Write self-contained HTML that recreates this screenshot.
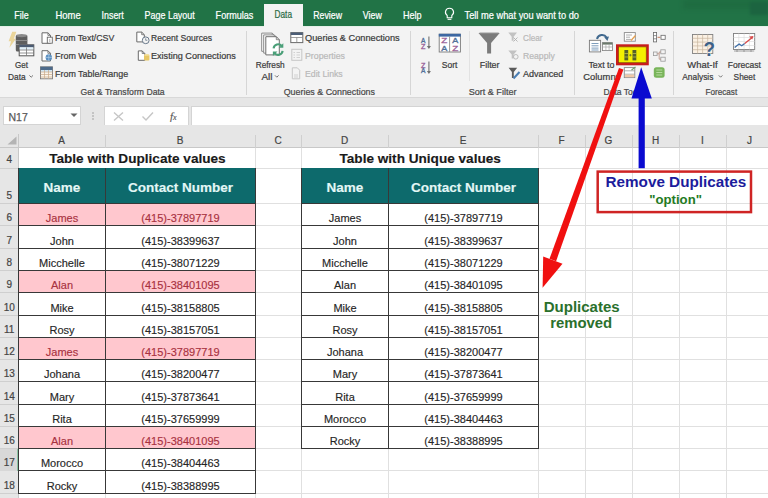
<!DOCTYPE html><html><head><meta charset="utf-8"><style>
*{margin:0;padding:0;box-sizing:border-box}
html,body{width:768px;height:498px;overflow:hidden;background:#fff;font-family:"Liberation Sans", sans-serif;position:relative}
.ab{position:absolute}
.t{position:absolute;white-space:nowrap;line-height:1}
.tab{position:absolute;top:7px;font-size:9px;color:#fff;white-space:nowrap;line-height:12px}
.rb{position:absolute;font-size:8.8px;color:#444;white-space:nowrap;line-height:11px}
.dis{color:#b8b8b8}
.gl{position:absolute;font-size:8.8px;color:#555;white-space:nowrap;line-height:11px}
.sep{position:absolute;width:1px;background:#d6d6d6}
.ch{position:absolute;top:134px;height:14px;font-size:10px;color:#444;-webkit-text-stroke:0.2px #444;text-align:center;line-height:14px}
.rh{position:absolute;left:0;width:18px;font-size:10.5px;color:#4a4a4a;text-align:center}
.c{position:absolute;font-size:11px;color:#222;text-align:center;white-space:nowrap}
.t{-webkit-text-stroke:0.15px currentColor}
</style></head><body>
<div class="ab" style="left:0;top:0;width:768px;height:26px;background:#217346"></div>
<div class="ab" style="left:683px;top:0;width:85px;height:9px;background:#1f6c41;filter:blur(2px)"></div>
<div class="ab" style="left:750px;top:2px;width:18px;height:13px;background:#1c6440;filter:blur(1.5px)"></div>
<div class="ab" style="left:264px;top:3.5px;width:39px;height:23px;background:#f3f3f3"></div>
<svg class="ab" style="left:443px;top:7px" width="13" height="14" viewBox="0 0 13 14"><path d="M6.5 1.2a4 4 0 0 0-2.3 7.3v2.2h4.6V8.5A4 4 0 0 0 6.5 1.2z" fill="none" stroke="#fff" stroke-width="1.1"/><path d="M4.6 12.3h3.8" stroke="#fff" stroke-width="1.1"/></svg>
<div class="ab" style="left:0;top:26px;width:768px;height:71px;background:#f3f3f3"></div>
<div class="ab" style="left:0;top:26px;width:264px;height:1px;background:#e4f0e8"></div>
<div class="ab" style="left:303px;top:26px;width:465px;height:1px;background:#e4f0e8"></div>
<div class="ab" style="left:0;top:97px;width:768px;height:1px;background:#d8d8d8"></div>
<div class="ab" style="left:0;top:98px;width:768px;height:27px;background:#e6e6e6"></div>
<div class="sep" style="left:469px;top:31px;height:50px;background:#e2e2e2"></div>
<div class="sep" style="left:246px;top:31px;height:64px"></div>
<div class="sep" style="left:410px;top:31px;height:64px"></div>
<div class="sep" style="left:574px;top:31px;height:64px"></div>
<div class="sep" style="left:673px;top:31px;height:64px"></div>
<svg class="ab" style="left:0;top:0" width="768" height="498" viewBox="0 0 768 498" font-family="Liberation Sans, sans-serif"><text x="14.3" y="18.6" textLength="14.3" lengthAdjust="spacingAndGlyphs" font-size="10.5" fill="#ffffff" stroke="#ffffff" stroke-width="0.22" font-weight="normal">File</text><text x="55.5" y="18.6" textLength="25.2" lengthAdjust="spacingAndGlyphs" font-size="10.5" fill="#ffffff" stroke="#ffffff" stroke-width="0.22" font-weight="normal">Home</text><text x="101.6" y="18.6" textLength="22.1" lengthAdjust="spacingAndGlyphs" font-size="10.5" fill="#ffffff" stroke="#ffffff" stroke-width="0.22" font-weight="normal">Insert</text><text x="144.5" y="18.6" textLength="50.3" lengthAdjust="spacingAndGlyphs" font-size="10.5" fill="#ffffff" stroke="#ffffff" stroke-width="0.22" font-weight="normal">Page Layout</text><text x="215.6" y="18.6" textLength="37.8" lengthAdjust="spacingAndGlyphs" font-size="10.5" fill="#ffffff" stroke="#ffffff" stroke-width="0.22" font-weight="normal">Formulas</text><text x="313.3" y="18.6" textLength="28.7" lengthAdjust="spacingAndGlyphs" font-size="10.5" fill="#ffffff" stroke="#ffffff" stroke-width="0.22" font-weight="normal">Review</text><text x="362.8" y="18.6" textLength="19" lengthAdjust="spacingAndGlyphs" font-size="10.5" fill="#ffffff" stroke="#ffffff" stroke-width="0.22" font-weight="normal">View</text><text x="402.9" y="18.6" textLength="18.6" lengthAdjust="spacingAndGlyphs" font-size="10.5" fill="#ffffff" stroke="#ffffff" stroke-width="0.22" font-weight="normal">Help</text><text x="464.5" y="18.6" textLength="114.5" lengthAdjust="spacingAndGlyphs" font-size="10.5" fill="#ffffff" stroke="#ffffff" stroke-width="0.22" font-weight="normal">Tell me what you want to do</text><text x="274.5" y="18.4" textLength="17.5" lengthAdjust="spacingAndGlyphs" font-size="10.5" fill="#2a6a44" stroke="#2a6a44" stroke-width="0.22" font-weight="normal">Data</text><text x="15.1" y="67.7" textLength="13" lengthAdjust="spacingAndGlyphs" font-size="9.5" fill="#3b3b3b" stroke="#3b3b3b" stroke-width="0.22" font-weight="normal">Get</text><text x="8.1" y="79.6" textLength="17.6" lengthAdjust="spacingAndGlyphs" font-size="9.5" fill="#3b3b3b" stroke="#3b3b3b" stroke-width="0.22" font-weight="normal">Data</text><text x="55" y="41.3" textLength="59.3" lengthAdjust="spacingAndGlyphs" font-size="9.5" fill="#3b3b3b" stroke="#3b3b3b" stroke-width="0.22" font-weight="normal">From Text/CSV</text><text x="55" y="59.1" textLength="41.5" lengthAdjust="spacingAndGlyphs" font-size="9.5" fill="#3b3b3b" stroke="#3b3b3b" stroke-width="0.22" font-weight="normal">From Web</text><text x="55" y="76.6" textLength="73.2" lengthAdjust="spacingAndGlyphs" font-size="9.5" fill="#3b3b3b" stroke="#3b3b3b" stroke-width="0.22" font-weight="normal">From Table/Range</text><text x="151" y="41.3" textLength="61" lengthAdjust="spacingAndGlyphs" font-size="9.5" fill="#3b3b3b" stroke="#3b3b3b" stroke-width="0.22" font-weight="normal">Recent Sources</text><text x="151" y="59.1" textLength="84.8" lengthAdjust="spacingAndGlyphs" font-size="9.5" fill="#3b3b3b" stroke="#3b3b3b" stroke-width="0.22" font-weight="normal">Existing Connections</text><text x="80.5" y="94.6" textLength="84.2" lengthAdjust="spacingAndGlyphs" font-size="9.5" fill="#484848" stroke="#484848" stroke-width="0.22" font-weight="normal">Get &amp; Transform Data</text><text x="255.7" y="67.7" textLength="29" lengthAdjust="spacingAndGlyphs" font-size="9.5" fill="#3b3b3b" stroke="#3b3b3b" stroke-width="0.22" font-weight="normal">Refresh</text><text x="261.5" y="79.6" textLength="11" lengthAdjust="spacingAndGlyphs" font-size="9.5" fill="#3b3b3b" stroke="#3b3b3b" stroke-width="0.22" font-weight="normal">All</text><text x="305" y="41.3" textLength="94.7" lengthAdjust="spacingAndGlyphs" font-size="9.5" fill="#3b3b3b" stroke="#3b3b3b" stroke-width="0.22" font-weight="normal">Queries &amp; Connections</text><text x="305" y="59.1" textLength="40" lengthAdjust="spacingAndGlyphs" font-size="9.5" fill="#b9b9b9" stroke="#b9b9b9" stroke-width="0.22" font-weight="normal">Properties</text><text x="305" y="76.6" textLength="37.7" lengthAdjust="spacingAndGlyphs" font-size="9.5" fill="#b9b9b9" stroke="#b9b9b9" stroke-width="0.22" font-weight="normal">Edit Links</text><text x="283.7" y="94.6" textLength="91.3" lengthAdjust="spacingAndGlyphs" font-size="9.5" fill="#484848" stroke="#484848" stroke-width="0.22" font-weight="normal">Queries &amp; Connections</text><text x="441.7" y="67.7" textLength="15.7" lengthAdjust="spacingAndGlyphs" font-size="9.5" fill="#3b3b3b" stroke="#3b3b3b" stroke-width="0.22" font-weight="normal">Sort</text><text x="479.7" y="67.7" textLength="19.9" lengthAdjust="spacingAndGlyphs" font-size="9.5" fill="#3b3b3b" stroke="#3b3b3b" stroke-width="0.22" font-weight="normal">Filter</text><text x="523" y="41.3" textLength="19.5" lengthAdjust="spacingAndGlyphs" font-size="9.5" fill="#b9b9b9" stroke="#b9b9b9" stroke-width="0.22" font-weight="normal">Clear</text><text x="523" y="59.1" textLength="31.7" lengthAdjust="spacingAndGlyphs" font-size="9.5" fill="#b9b9b9" stroke="#b9b9b9" stroke-width="0.22" font-weight="normal">Reapply</text><text x="523" y="76.6" textLength="40.3" lengthAdjust="spacingAndGlyphs" font-size="9.5" fill="#3b3b3b" stroke="#3b3b3b" stroke-width="0.22" font-weight="normal">Advanced</text><text x="468.7" y="94.6" textLength="47.8" lengthAdjust="spacingAndGlyphs" font-size="9.5" fill="#484848" stroke="#484848" stroke-width="0.22" font-weight="normal">Sort &amp; Filter</text><text x="588.4" y="67.7" textLength="26.1" lengthAdjust="spacingAndGlyphs" font-size="9.5" fill="#3b3b3b" stroke="#3b3b3b" stroke-width="0.22" font-weight="normal">Text to</text><text x="583.3" y="79.6" textLength="37" lengthAdjust="spacingAndGlyphs" font-size="9.5" fill="#3b3b3b" stroke="#3b3b3b" stroke-width="0.22" font-weight="normal">Columns</text><text x="603.6" y="94.6" textLength="40" lengthAdjust="spacingAndGlyphs" font-size="9.5" fill="#484848" stroke="#484848" stroke-width="0.22" font-weight="normal">Data Tools</text><text x="687.3" y="67.7" textLength="30.4" lengthAdjust="spacingAndGlyphs" font-size="9.5" fill="#3b3b3b" stroke="#3b3b3b" stroke-width="0.22" font-weight="normal">What-If</text><text x="682.3" y="79.6" textLength="31.1" lengthAdjust="spacingAndGlyphs" font-size="9.5" fill="#3b3b3b" stroke="#3b3b3b" stroke-width="0.22" font-weight="normal">Analysis</text><text x="727.8" y="67.7" textLength="33.2" lengthAdjust="spacingAndGlyphs" font-size="9.5" fill="#3b3b3b" stroke="#3b3b3b" stroke-width="0.22" font-weight="normal">Forecast</text><text x="733.6" y="79.6" textLength="21.7" lengthAdjust="spacingAndGlyphs" font-size="9.5" fill="#3b3b3b" stroke="#3b3b3b" stroke-width="0.22" font-weight="normal">Sheet</text><text x="705.4" y="94.6" textLength="31.8" lengthAdjust="spacingAndGlyphs" font-size="9.5" fill="#484848" stroke="#484848" stroke-width="0.22" font-weight="normal">Forecast</text><path d="M29.4 75.39999999999999l1.8 1.8l1.8-1.8" fill="none" stroke="#666" stroke-width="0.9"/><path d="M275.0 75.39999999999999l1.8 1.8l1.8-1.8" fill="none" stroke="#666" stroke-width="0.9"/><path d="M718.8000000000001 75.39999999999999l1.8 1.8l1.8-1.8" fill="none" stroke="#666" stroke-width="0.9"/></svg>
<svg class="ab" style="left:0;top:0" width="768" height="498" viewBox="0 0 768 498" font-family="Liberation Sans, sans-serif"><path d="M12.2 31.8h4.2l-2.6 7h2.2l-6.6 9l1.6-6.6h-2.4z" fill="#ead59a"/><rect x="15.8" y="35" width="11.6" height="16.5" rx="1.5" fill="#5e5e5e"/><ellipse cx="21.6" cy="35.6" rx="5.8" ry="1.6" fill="#8a8a8a"/><path d="M15.8 40.5h11.6M15.8 44.5h11.6" stroke="#9a9a9a" stroke-width="0.8"/><rect x="19.2" y="44.8" width="14.6" height="11" fill="#fff" stroke="#555" stroke-width="1"/><rect x="19.2" y="44.8" width="14.6" height="2.6" fill="#4b5b72"/><rect x="19.7" y="47.4" width="13.6" height="2.2" fill="#dff0fa"/><path d="M19.2 50h14.6M19.2 53h14.6M26.5 47.4v8.4" stroke="#777" stroke-width="0.8"/><path d="M42.0 32.8h5.9l2.6 2.6v7.9h-8.5z" fill="#fff" stroke="#6a6a6a" stroke-width="1"/><path d="M47.9 32.8v2.6h2.6" fill="none" stroke="#6a6a6a" stroke-width="0.8"/><rect x="47.3" y="37.2" width="5" height="6" fill="#fff" stroke="#6a6a6a" stroke-width="0.9"/><path d="M49.8 39v3" stroke="#888" stroke-width="0.7"/><path d="M42.0 50.7h5.9l2.6 2.6v7.700000000000001h-8.5z" fill="#fff" stroke="#6a6a6a" stroke-width="1"/><path d="M47.9 50.7v2.6h2.6" fill="none" stroke="#6a6a6a" stroke-width="0.8"/><circle cx="48.8" cy="57.4" r="3.2" fill="#5b8fc0"/><path d="M45.6 57.4h6.4M48.8 54.2v6.4" stroke="#bcd6ee" stroke-width="0.6"/><rect x="40.5" y="66.8" width="12" height="12" fill="#fbf4ea" stroke="#7a7a7a" stroke-width="0.9"/><rect x="40.5" y="66.8" width="12" height="3.2" fill="#4d6a8a"/><rect x="41" y="70" width="11" height="1.8" fill="#cfe6f5"/><path d="M40.5 72h12M40.5 74.5h12M40.5 77h12M44.5 70v9M48.5 70v9" stroke="#c9a98a" stroke-width="0.7"/><path d="M136.8 32.1h4.9l2.6 2.6v7.200000000000001h-7.5z" fill="#fff" stroke="#6a6a6a" stroke-width="1"/><path d="M141.70000000000002 32.1v2.6h2.6" fill="none" stroke="#6a6a6a" stroke-width="0.8"/><circle cx="145.7" cy="40.3" r="3.4" fill="#f3f3f3" stroke="#6a7a8c" stroke-width="1"/><path d="M145.7 38.3v2h1.6" fill="none" stroke="#6a7a8c" stroke-width="0.8"/><path d="M138.3 50.9h3.9l2.6 2.6v6.800000000000001h-6.5z" fill="#fff" stroke="#6a6a6a" stroke-width="1"/><path d="M142.20000000000002 50.9v2.6h2.6" fill="none" stroke="#6a6a6a" stroke-width="0.8"/><rect x="144" y="54.7" width="5.4" height="5.8" rx="1" fill="#e7c765"/><ellipse cx="146.7" cy="54.9" rx="2.7" ry="0.9" fill="#f4df9a"/><path d="M261.7 33.1h10.5l3 3v15.2h-13.5z" fill="#fff" stroke="#8a8a8a" stroke-width="1"/><path d="M272.2 33.1v3h3" fill="none" stroke="#8a8a8a" stroke-width="0.8"/><path d="M263.7 34.9h10.5l3 3v15.2h-13.5z" fill="#fff" stroke="#8a8a8a" stroke-width="1"/><path d="M274.2 34.9v3h3" fill="none" stroke="#8a8a8a" stroke-width="0.8"/><path d="M265.8 36.7h10.5l3 3v15.2h-13.5z" fill="#fff" stroke="#6e6e6e" stroke-width="1"/><path d="M276.3 36.7v3h3" fill="none" stroke="#6e6e6e" stroke-width="0.8"/><path d="M273.6 48.3a4.6 4.6 0 0 1 8.1-2.4" fill="none" stroke="#4a9f78" stroke-width="2.1"/><path d="M283.3 43.2v4.6h-4.6z" fill="#4a9f78"/><path d="M282.6 50.8a4.6 4.6 0 0 1-8.1 2.4" fill="none" stroke="#4a9f78" stroke-width="2.1"/><path d="M272.9 56v-4.6h4.6z" fill="#4a9f78"/><rect x="290.8" y="32.6" width="12" height="10" fill="#fff" stroke="#6a6a6a" stroke-width="1"/><rect x="290.8" y="32.6" width="12" height="2.4" fill="#4d5f78"/><path d="M290.8 37.5h12M296.8 37.5v5" stroke="#888" stroke-width="0.8"/><rect x="291.8" y="49.3" width="10" height="11" fill="none" stroke="#c6c6c6" stroke-width="1"/><path d="M293.5 52.5h1.5M296.5 52.5h3.5M293.5 55h1.5M296.5 55h3.5M293.5 57.5h1.5M296.5 57.5h3.5" stroke="#c8c8c8" stroke-width="0.8"/><path d="M292.3 67.8h5l2.4 2.4v8.6h-7.4z" fill="none" stroke="#c6c6c6" stroke-width="1"/><path d="M294 75h4M294 77h4" stroke="#c8c8c8" stroke-width="0.8"/><text x="421" y="42.8" font-size="7.4" fill="#4f6f98" textLength="4.4" lengthAdjust="spacingAndGlyphs" stroke="#4f6f98" stroke-width="0.35">A</text><text x="421" y="48.7" font-size="7.4" fill="#9a5f98" textLength="4.4" lengthAdjust="spacingAndGlyphs" stroke="#9a5f98" stroke-width="0.35">Z</text><path d="M428.9 36.5v11" stroke="#707070" stroke-width="1.1"/><path d="M426.9 46l2 3l2-3z" fill="#707070"/><text x="421" y="67.8" font-size="7.4" fill="#9a5f98" textLength="4.4" lengthAdjust="spacingAndGlyphs" stroke="#9a5f98" stroke-width="0.35">Z</text><text x="421" y="73.4" font-size="7.4" fill="#4f6f98" textLength="4.4" lengthAdjust="spacingAndGlyphs" stroke="#4f6f98" stroke-width="0.35">A</text><path d="M428.9 61.5v11" stroke="#707070" stroke-width="1.1"/><path d="M426.9 71l2 3l2-3z" fill="#707070"/><rect x="439.2" y="34.2" width="21.2" height="17.8" fill="#fff" stroke="#7a7a7a" stroke-width="0.9"/><rect x="438.8" y="33.8" width="22" height="2.8" fill="#3d68a2"/><path d="M449.6 36.5v15.5" stroke="#8a8a8a" stroke-width="0.9"/><text x="441.2" y="43.4" font-size="7.8" fill="#9a5f98" textLength="6" lengthAdjust="spacingAndGlyphs" stroke="#9a5f98" stroke-width="0.35">Z</text><text x="441.2" y="51" font-size="7.8" fill="#4f6f98" textLength="6" lengthAdjust="spacingAndGlyphs" stroke="#4f6f98" stroke-width="0.35">A</text><text x="452.3" y="43.4" font-size="7.8" fill="#4f6f98" textLength="6" lengthAdjust="spacingAndGlyphs" stroke="#4f6f98" stroke-width="0.35">A</text><text x="452.3" y="51" font-size="7.8" fill="#9a5f98" textLength="6" lengthAdjust="spacingAndGlyphs" stroke="#9a5f98" stroke-width="0.35">Z</text><path d="M478.5 33h21.2l-8.6 10v10.5h-4v-10.5z" fill="#7b7b7b"/><path d="M479.5 33h19.2" stroke="#9a9a9a" stroke-width="1"/><path d="M508.3 32.6h8.7l-3.4 4.2v4h-1.9v-4z" fill="#c2c2c2"/><path d="M513.5 37.5l4 4M517.5 37.5l-4 4" stroke="#b0b0b0" stroke-width="0.9"/><path d="M508.3 50.4h8.7l-3.4 4.2v4h-1.9v-4z" fill="#c2c2c2"/><circle cx="515.8" cy="56.8" r="2.3" fill="none" stroke="#b5b5b5" stroke-width="0.9"/><path d="M508.6 67.8h8.6l-3.4 4.2v6h-1.9v-6z" fill="#5a5a5a"/><path d="M513.5 78.5l6-6.5" stroke="#4a7fb5" stroke-width="2"/><path d="M597 39a5.3 5.3 0 0 1 9.6-1.5" fill="none" stroke="#41698e" stroke-width="2"/><path d="M604.2 37.2l4.8 -0.8l-1.6 4.6z" fill="#41698e"/><rect x="589.4" y="40.3" width="11.2" height="11.6" fill="#fff" stroke="#7a7a7a" stroke-width="0.9"/><path d="M591.5 43.5h7M591.5 45.8h7M591.5 48.1h7M591.5 50h7" stroke="#6f93b5" stroke-width="0.9"/><rect x="602.6" y="42.6" width="9.8" height="8" fill="#fff" stroke="#808080" stroke-width="0.8"/><rect x="602.6" y="42.6" width="9.8" height="2" fill="#6b7a6b"/><path d="M602.6 47h9.8M605.9 44.6v6M609.1 44.6v6" stroke="#999" stroke-width="0.6"/><rect x="624.3" y="32.6" width="11" height="8.6" fill="#fff" stroke="#8a8a8a" stroke-width="0.9"/><path d="M626 35h6M626 37.2h4M626 39.4h5" stroke="#9a9a9a" stroke-width="0.8"/><path d="M631 40.5l4.5-5" stroke="#e5a050" stroke-width="1.3"/><rect x="624.3" y="67.6" width="10.5" height="10" fill="#fff" stroke="#8a8a8a" stroke-width="0.9"/><path d="M624.3 70.8h10.5M624.3 74.2h10.5" stroke="#999" stroke-width="0.8"/><rect x="625" y="74.6" width="9" height="2.6" fill="#f0c8a8"/><path d="M631.5 70l4-3" stroke="#6aa36a" stroke-width="1.1"/><rect x="653.4" y="32.5" width="3.2" height="9.4" fill="#fff" stroke="#6a6a6a" stroke-width="0.8"/><path d="M653.4 35.6h3.2M653.4 38.8h3.2" stroke="#6a6a6a" stroke-width="0.7"/><path d="M657.5 37.3h2.8" stroke="#c07050" stroke-width="0.9"/><rect x="661" y="35.3" width="4.2" height="4" fill="#fff" stroke="#6a6a6a" stroke-width="0.8"/><rect x="653.5" y="52" width="3.6" height="3.6" fill="none" stroke="#9a9a9a" stroke-width="0.8"/><rect x="660.8" y="49.8" width="4.4" height="4" fill="none" stroke="#9a9a9a" stroke-width="0.8"/><rect x="660.8" y="57.2" width="4.4" height="4" fill="none" stroke="#9a9a9a" stroke-width="0.8"/><path d="M657.1 53.8h2M659.2 52v7.2h1.6M659.2 52h1.6" fill="none" stroke="#b08070" stroke-width="0.7"/><rect x="653.8" y="67.2" width="10.8" height="10.6" rx="2.5" fill="#79b55a"/><path d="M656.3 70h6M656.3 72.5h6M656.3 75h6" stroke="#c5e3b0" stroke-width="0.8"/><rect x="692.5" y="34.5" width="20.3" height="19" fill="#fbf1e4" stroke="#808080" stroke-width="0.9"/><path d="M692.5 38.3h20.3M692.5 42.1h20.3M692.5 45.9h20.3M692.5 49.7h20.3M697.6 34.5v19M702.6 34.5v19M707.7 34.5v19" stroke="#c8b49e" stroke-width="0.7"/><text x="703.6" y="55.8" font-size="19.5" font-weight="bold" fill="#3e6187" stroke="#f3f3f3" stroke-width="0.8" paint-order="stroke" textLength="11.5" lengthAdjust="spacingAndGlyphs">?</text><rect x="733.5" y="33.5" width="21.2" height="16" fill="#fff" stroke="#7d7d7d" stroke-width="0.9"/><path d="M733.5 37.5h21.2M733.5 41.5h21.2M733.5 45.5h21.2M738.8 33.5v16M744.1 33.5v16M749.4 33.5v16" stroke="#d8d8d8" stroke-width="0.6"/><path d="M734 51h20.2M737 49.7v2.3M744 49.7v2.3M751 49.7v2.3" stroke="#8a8a8a" stroke-width="0.8"/><path d="M734.6 47.6l4.5-3.6l2.6 1.8l3-2.4" fill="none" stroke="#3e6ea8" stroke-width="1.3"/><path d="M744.7 43.4l7.5-6" fill="none" stroke="#d84a4a" stroke-width="1.3"/><path d="M753.5 36l-4.3 0.6l3 3z" fill="#d84a4a"/><rect x="617.2" y="45.5" width="30.4" height="18.6" fill="#f4f000" stroke="#c81c1c" stroke-width="2.4"/><rect x="618.6" y="46.9" width="27.6" height="15.8" fill="none" stroke="#7a2a10" stroke-width="0.6"/><rect x="624.4" y="50" width="3.8" height="10.4" fill="#56602a"/><rect x="632.5" y="50" width="3.8" height="10.4" fill="#56602a"/><path d="M624.4 53.5h3.8M624.4 57h3.8M632.5 53.5h3.8M632.5 57h3.8" stroke="#c8cc50" stroke-width="0.7"/><path d="M629.2 55.2h2.4M630.4 54v2.4" stroke="#6a7030" stroke-width="0.8"/></svg>
<div class="ab" style="left:3px;top:106px;width:78px;height:19px;background:#fff;border:1px solid #d4d4d4"></div>
<div class="t" style="left:8.5px;top:111.5px;font-size:10.5px;color:#5a5a5a;-webkit-text-stroke:0.25px #5a5a5a">N17</div>
<svg class="ab" style="left:70px;top:113px" width="8" height="5"><path d="M0.5 0.5h7l-3.5 3.5z" fill="#666"/></svg>
<svg class="ab" style="left:91px;top:111px" width="4" height="10"><circle cx="2" cy="2" r="0.8" fill="#999"/><circle cx="2" cy="5" r="0.8" fill="#999"/><circle cx="2" cy="8" r="0.8" fill="#999"/></svg>
<div class="ab" style="left:104px;top:106px;width:85px;height:20px;background:#fff;border:1px solid #d4d4d4"></div>
<svg class="ab" style="left:112px;top:111px" width="13" height="11"><path d="M2 1.5l9 8M11 1.5l-9 8" stroke="#c6c6c6" stroke-width="1.4"/></svg>
<svg class="ab" style="left:141px;top:111px" width="13" height="11"><path d="M1.5 5.5l3.5 3.5 7-7.5" fill="none" stroke="#c6c6c6" stroke-width="1.4"/></svg>
<div class="t" style="left:170px;top:111px;font-size:11px;color:#555;font-family:'Liberation Serif',serif;font-style:italic">f<span style="font-size:8px">x</span></div>
<div class="ab" style="left:191px;top:106px;width:580px;height:20px;background:#fff;border:1px solid #d4d4d4"></div>
<div class="ab" style="left:0;top:125px;width:768px;height:23px;background:#e6e6e6"></div>
<div class="ab" style="left:0;top:147px;width:768px;height:1px;background:#c8c8c8"></div>
<svg class="ab" style="left:7px;top:136px" width="10" height="9"><path d="M9.5 0.5v8h-9z" fill="#b4b4b4"/></svg>
<div class="ab" style="left:0;top:148px;width:18px;height:350px;background:#e6e6e6"></div>
<div class="ab" style="left:18px;top:134px;width:1px;height:364px;background:#c8c8c8"></div>
<div class="ch" style="left:18px;width:87px">A</div>
<div class="ab" style="left:105px;top:135px;width:1px;height:13px;background:#cfcfcf"></div>
<div class="ch" style="left:105px;width:150px">B</div>
<div class="ab" style="left:255px;top:135px;width:1px;height:13px;background:#cfcfcf"></div>
<div class="ch" style="left:255px;width:46px">C</div>
<div class="ab" style="left:301px;top:135px;width:1px;height:13px;background:#cfcfcf"></div>
<div class="ch" style="left:301px;width:87px">D</div>
<div class="ab" style="left:388px;top:135px;width:1px;height:13px;background:#cfcfcf"></div>
<div class="ch" style="left:388px;width:150px">E</div>
<div class="ab" style="left:538px;top:135px;width:1px;height:13px;background:#cfcfcf"></div>
<div class="ch" style="left:538px;width:47px">F</div>
<div class="ab" style="left:585px;top:135px;width:1px;height:13px;background:#cfcfcf"></div>
<div class="ch" style="left:585px;width:47px">G</div>
<div class="ab" style="left:632px;top:135px;width:1px;height:13px;background:#cfcfcf"></div>
<div class="ch" style="left:632px;width:47px">H</div>
<div class="ab" style="left:679px;top:135px;width:1px;height:13px;background:#cfcfcf"></div>
<div class="ch" style="left:679px;width:47px">I</div>
<div class="ab" style="left:726px;top:135px;width:1px;height:13px;background:#cfcfcf"></div>
<div class="ch" style="left:726px;width:47px">J</div>
<div class="ab" style="left:773px;top:135px;width:1px;height:13px;background:#cfcfcf"></div>
<div class="ab" style="left:105px;top:148px;width:1px;height:350px;background:#e0e0e0"></div>
<div class="ab" style="left:255px;top:148px;width:1px;height:350px;background:#e0e0e0"></div>
<div class="ab" style="left:301px;top:148px;width:1px;height:350px;background:#e0e0e0"></div>
<div class="ab" style="left:388px;top:148px;width:1px;height:350px;background:#e0e0e0"></div>
<div class="ab" style="left:538px;top:148px;width:1px;height:350px;background:#e0e0e0"></div>
<div class="ab" style="left:585px;top:148px;width:1px;height:350px;background:#e0e0e0"></div>
<div class="ab" style="left:632px;top:148px;width:1px;height:350px;background:#e0e0e0"></div>
<div class="ab" style="left:679px;top:148px;width:1px;height:350px;background:#e0e0e0"></div>
<div class="ab" style="left:726px;top:148px;width:1px;height:350px;background:#e0e0e0"></div>
<div class="ab" style="left:19px;top:168px;width:750px;height:1px;background:#e0e0e0"></div>
<div class="ab" style="left:0;top:168px;width:18px;height:1px;background:#cfcfcf"></div>
<div class="ab" style="left:19px;top:203px;width:750px;height:1px;background:#e0e0e0"></div>
<div class="ab" style="left:0;top:203px;width:18px;height:1px;background:#cfcfcf"></div>
<div class="ab" style="left:19px;top:225px;width:750px;height:1px;background:#e0e0e0"></div>
<div class="ab" style="left:0;top:225px;width:18px;height:1px;background:#cfcfcf"></div>
<div class="ab" style="left:19px;top:248px;width:750px;height:1px;background:#e0e0e0"></div>
<div class="ab" style="left:0;top:248px;width:18px;height:1px;background:#cfcfcf"></div>
<div class="ab" style="left:19px;top:270px;width:750px;height:1px;background:#e0e0e0"></div>
<div class="ab" style="left:0;top:270px;width:18px;height:1px;background:#cfcfcf"></div>
<div class="ab" style="left:19px;top:292px;width:750px;height:1px;background:#e0e0e0"></div>
<div class="ab" style="left:0;top:292px;width:18px;height:1px;background:#cfcfcf"></div>
<div class="ab" style="left:19px;top:315px;width:750px;height:1px;background:#e0e0e0"></div>
<div class="ab" style="left:0;top:315px;width:18px;height:1px;background:#cfcfcf"></div>
<div class="ab" style="left:19px;top:337px;width:750px;height:1px;background:#e0e0e0"></div>
<div class="ab" style="left:0;top:337px;width:18px;height:1px;background:#cfcfcf"></div>
<div class="ab" style="left:19px;top:359px;width:750px;height:1px;background:#e0e0e0"></div>
<div class="ab" style="left:0;top:359px;width:18px;height:1px;background:#cfcfcf"></div>
<div class="ab" style="left:19px;top:381px;width:750px;height:1px;background:#e0e0e0"></div>
<div class="ab" style="left:0;top:381px;width:18px;height:1px;background:#cfcfcf"></div>
<div class="ab" style="left:19px;top:404px;width:750px;height:1px;background:#e0e0e0"></div>
<div class="ab" style="left:0;top:404px;width:18px;height:1px;background:#cfcfcf"></div>
<div class="ab" style="left:19px;top:426px;width:750px;height:1px;background:#e0e0e0"></div>
<div class="ab" style="left:0;top:426px;width:18px;height:1px;background:#cfcfcf"></div>
<div class="ab" style="left:19px;top:448px;width:750px;height:1px;background:#e0e0e0"></div>
<div class="ab" style="left:0;top:448px;width:18px;height:1px;background:#cfcfcf"></div>
<div class="ab" style="left:19px;top:470px;width:750px;height:1px;background:#e0e0e0"></div>
<div class="ab" style="left:0;top:470px;width:18px;height:1px;background:#cfcfcf"></div>
<div class="ab" style="left:19px;top:493px;width:750px;height:1px;background:#e0e0e0"></div>
<div class="ab" style="left:0;top:493px;width:18px;height:1px;background:#cfcfcf"></div>
<div class="ab" style="left:19px;top:515px;width:750px;height:1px;background:#e0e0e0"></div>
<div class="ab" style="left:0;top:515px;width:18px;height:1px;background:#cfcfcf"></div>
<div class="ab" style="left:0;top:449px;width:18px;height:22px;background:#d8d8d8"></div>
<div class="ab" style="left:17px;top:449px;width:1px;height:22px;background:#8cc4a4"></div>
<div class="ab" style="left:105px;top:148px;width:1px;height:20px;background:#fff"></div>
<div class="ab" style="left:388px;top:148px;width:1px;height:20px;background:#fff"></div>
<div class="t" style="left:-290.8px;width:600px;text-align:center;top:155.23px;font-size:10px;color:#444;-webkit-text-stroke:0.2px #444">4</div>
<div class="t" style="left:-290.8px;width:600px;text-align:center;top:191.44px;font-size:10px;color:#444;-webkit-text-stroke:0.2px #444">5</div>
<div class="t" style="left:-290.8px;width:600px;text-align:center;top:213.44px;font-size:10px;color:#444;-webkit-text-stroke:0.2px #444">6</div>
<div class="t" style="left:-290.8px;width:600px;text-align:center;top:236.44px;font-size:10px;color:#444;-webkit-text-stroke:0.2px #444">7</div>
<div class="t" style="left:-290.8px;width:600px;text-align:center;top:258.44px;font-size:10px;color:#444;-webkit-text-stroke:0.2px #444">8</div>
<div class="t" style="left:-290.8px;width:600px;text-align:center;top:280.44px;font-size:10px;color:#444;-webkit-text-stroke:0.2px #444">9</div>
<div class="t" style="left:-290.8px;width:600px;text-align:center;top:303.44px;font-size:10px;color:#444;-webkit-text-stroke:0.2px #444">10</div>
<div class="t" style="left:-290.8px;width:600px;text-align:center;top:325.44px;font-size:10px;color:#444;-webkit-text-stroke:0.2px #444">11</div>
<div class="t" style="left:-290.8px;width:600px;text-align:center;top:347.44px;font-size:10px;color:#444;-webkit-text-stroke:0.2px #444">12</div>
<div class="t" style="left:-290.8px;width:600px;text-align:center;top:369.44px;font-size:10px;color:#444;-webkit-text-stroke:0.2px #444">13</div>
<div class="t" style="left:-290.8px;width:600px;text-align:center;top:392.44px;font-size:10px;color:#444;-webkit-text-stroke:0.2px #444">14</div>
<div class="t" style="left:-290.8px;width:600px;text-align:center;top:414.44px;font-size:10px;color:#444;-webkit-text-stroke:0.2px #444">15</div>
<div class="t" style="left:-290.8px;width:600px;text-align:center;top:436.44px;font-size:10px;color:#444;-webkit-text-stroke:0.2px #444">16</div>
<div class="t" style="left:-290.8px;width:600px;text-align:center;top:458.44px;font-size:10px;color:#444;-webkit-text-stroke:0.2px #444">17</div>
<div class="t" style="left:-290.8px;width:600px;text-align:center;top:481.44px;font-size:10px;color:#444;-webkit-text-stroke:0.2px #444">18</div>
<div class="ab" style="left:18px;top:168px;width:238px;height:35px;background:#0d6a6c"></div>
<div class="ab" style="left:18px;top:203px;width:237px;height:22px;background:#ffc7ce"></div>
<div class="ab" style="left:18px;top:270px;width:237px;height:22px;background:#ffc7ce"></div>
<div class="ab" style="left:18px;top:337px;width:237px;height:22px;background:#ffc7ce"></div>
<div class="ab" style="left:18px;top:426px;width:237px;height:22px;background:#ffc7ce"></div>
<div class="ab" style="left:18px;top:203px;width:238px;height:1px;background:#383838"></div>
<div class="ab" style="left:18px;top:225px;width:238px;height:1px;background:#383838"></div>
<div class="ab" style="left:18px;top:248px;width:238px;height:1px;background:#383838"></div>
<div class="ab" style="left:18px;top:270px;width:238px;height:1px;background:#383838"></div>
<div class="ab" style="left:18px;top:292px;width:238px;height:1px;background:#383838"></div>
<div class="ab" style="left:18px;top:315px;width:238px;height:1px;background:#383838"></div>
<div class="ab" style="left:18px;top:337px;width:238px;height:1px;background:#383838"></div>
<div class="ab" style="left:18px;top:359px;width:238px;height:1px;background:#383838"></div>
<div class="ab" style="left:18px;top:381px;width:238px;height:1px;background:#383838"></div>
<div class="ab" style="left:18px;top:404px;width:238px;height:1px;background:#383838"></div>
<div class="ab" style="left:18px;top:426px;width:238px;height:1px;background:#383838"></div>
<div class="ab" style="left:18px;top:448px;width:238px;height:1px;background:#383838"></div>
<div class="ab" style="left:18px;top:470px;width:238px;height:1px;background:#383838"></div>
<div class="ab" style="left:18px;top:493px;width:238px;height:1px;background:#383838"></div>
<div class="ab" style="left:18px;top:168px;width:1px;height:326px;background:#383838"></div>
<div class="ab" style="left:105px;top:168px;width:1px;height:326px;background:#383838"></div>
<div class="ab" style="left:255px;top:168px;width:1px;height:326px;background:#383838"></div>
<div class="t" style="left:-238.0px;width:600px;text-align:center;top:180.57px;font-size:13.5px;font-weight:bold;color:#e3f7f6">Name</div>
<div class="t" style="left:-119.5px;width:600px;text-align:center;top:180.57px;font-size:13.5px;font-weight:bold;color:#e3f7f6">Contact Number</div>
<div class="t" style="left:-238.0px;width:600px;text-align:center;top:212.79px;font-size:11px;color:#a8323f">James</div>
<div class="t" style="left:-119.5px;width:600px;text-align:center;top:212.79px;font-size:11px;color:#a8323f">(415)-37897719</div>
<div class="t" style="left:-238.0px;width:600px;text-align:center;top:235.79px;font-size:11px;color:#262626">John</div>
<div class="t" style="left:-119.5px;width:600px;text-align:center;top:235.79px;font-size:11px;color:#262626">(415)-38399637</div>
<div class="t" style="left:-238.0px;width:600px;text-align:center;top:257.79px;font-size:11px;color:#262626">Micchelle</div>
<div class="t" style="left:-119.5px;width:600px;text-align:center;top:257.79px;font-size:11px;color:#262626">(415)-38071229</div>
<div class="t" style="left:-238.0px;width:600px;text-align:center;top:279.79px;font-size:11px;color:#a8323f">Alan</div>
<div class="t" style="left:-119.5px;width:600px;text-align:center;top:279.79px;font-size:11px;color:#a8323f">(415)-38401095</div>
<div class="t" style="left:-238.0px;width:600px;text-align:center;top:302.79px;font-size:11px;color:#262626">Mike</div>
<div class="t" style="left:-119.5px;width:600px;text-align:center;top:302.79px;font-size:11px;color:#262626">(415)-38158805</div>
<div class="t" style="left:-238.0px;width:600px;text-align:center;top:324.79px;font-size:11px;color:#262626">Rosy</div>
<div class="t" style="left:-119.5px;width:600px;text-align:center;top:324.79px;font-size:11px;color:#262626">(415)-38157051</div>
<div class="t" style="left:-238.0px;width:600px;text-align:center;top:346.79px;font-size:11px;color:#a8323f">James</div>
<div class="t" style="left:-119.5px;width:600px;text-align:center;top:346.79px;font-size:11px;color:#a8323f">(415)-37897719</div>
<div class="t" style="left:-238.0px;width:600px;text-align:center;top:368.79px;font-size:11px;color:#262626">Johana</div>
<div class="t" style="left:-119.5px;width:600px;text-align:center;top:368.79px;font-size:11px;color:#262626">(415)-38200477</div>
<div class="t" style="left:-238.0px;width:600px;text-align:center;top:391.79px;font-size:11px;color:#262626">Mary</div>
<div class="t" style="left:-119.5px;width:600px;text-align:center;top:391.79px;font-size:11px;color:#262626">(415)-37873641</div>
<div class="t" style="left:-238.0px;width:600px;text-align:center;top:413.79px;font-size:11px;color:#262626">Rita</div>
<div class="t" style="left:-119.5px;width:600px;text-align:center;top:413.79px;font-size:11px;color:#262626">(415)-37659999</div>
<div class="t" style="left:-238.0px;width:600px;text-align:center;top:435.79px;font-size:11px;color:#a8323f">Alan</div>
<div class="t" style="left:-119.5px;width:600px;text-align:center;top:435.79px;font-size:11px;color:#a8323f">(415)-38401095</div>
<div class="t" style="left:-238.0px;width:600px;text-align:center;top:457.79px;font-size:11px;color:#262626">Morocco</div>
<div class="t" style="left:-119.5px;width:600px;text-align:center;top:457.79px;font-size:11px;color:#262626">(415)-38404463</div>
<div class="t" style="left:-238.0px;width:600px;text-align:center;top:480.79px;font-size:11px;color:#262626">Rocky</div>
<div class="t" style="left:-119.5px;width:600px;text-align:center;top:480.79px;font-size:11px;color:#262626">(415)-38388995</div>
<div class="ab" style="left:301px;top:168px;width:238px;height:35px;background:#0d6a6c"></div>
<div class="ab" style="left:301px;top:203px;width:238px;height:1px;background:#383838"></div>
<div class="ab" style="left:301px;top:225px;width:238px;height:1px;background:#383838"></div>
<div class="ab" style="left:301px;top:248px;width:238px;height:1px;background:#383838"></div>
<div class="ab" style="left:301px;top:270px;width:238px;height:1px;background:#383838"></div>
<div class="ab" style="left:301px;top:292px;width:238px;height:1px;background:#383838"></div>
<div class="ab" style="left:301px;top:315px;width:238px;height:1px;background:#383838"></div>
<div class="ab" style="left:301px;top:337px;width:238px;height:1px;background:#383838"></div>
<div class="ab" style="left:301px;top:359px;width:238px;height:1px;background:#383838"></div>
<div class="ab" style="left:301px;top:381px;width:238px;height:1px;background:#383838"></div>
<div class="ab" style="left:301px;top:404px;width:238px;height:1px;background:#383838"></div>
<div class="ab" style="left:301px;top:426px;width:238px;height:1px;background:#383838"></div>
<div class="ab" style="left:301px;top:448px;width:238px;height:1px;background:#383838"></div>
<div class="ab" style="left:301px;top:168px;width:1px;height:281px;background:#383838"></div>
<div class="ab" style="left:388px;top:168px;width:1px;height:281px;background:#383838"></div>
<div class="ab" style="left:538px;top:168px;width:1px;height:281px;background:#383838"></div>
<div class="t" style="left:45.0px;width:600px;text-align:center;top:180.57px;font-size:13.5px;font-weight:bold;color:#e3f7f6">Name</div>
<div class="t" style="left:163.5px;width:600px;text-align:center;top:180.57px;font-size:13.5px;font-weight:bold;color:#e3f7f6">Contact Number</div>
<div class="t" style="left:45.0px;width:600px;text-align:center;top:212.79px;font-size:11px;color:#262626">James</div>
<div class="t" style="left:163.5px;width:600px;text-align:center;top:212.79px;font-size:11px;color:#262626">(415)-37897719</div>
<div class="t" style="left:45.0px;width:600px;text-align:center;top:235.79px;font-size:11px;color:#262626">John</div>
<div class="t" style="left:163.5px;width:600px;text-align:center;top:235.79px;font-size:11px;color:#262626">(415)-38399637</div>
<div class="t" style="left:45.0px;width:600px;text-align:center;top:257.79px;font-size:11px;color:#262626">Micchelle</div>
<div class="t" style="left:163.5px;width:600px;text-align:center;top:257.79px;font-size:11px;color:#262626">(415)-38071229</div>
<div class="t" style="left:45.0px;width:600px;text-align:center;top:279.79px;font-size:11px;color:#262626">Alan</div>
<div class="t" style="left:163.5px;width:600px;text-align:center;top:279.79px;font-size:11px;color:#262626">(415)-38401095</div>
<div class="t" style="left:45.0px;width:600px;text-align:center;top:302.79px;font-size:11px;color:#262626">Mike</div>
<div class="t" style="left:163.5px;width:600px;text-align:center;top:302.79px;font-size:11px;color:#262626">(415)-38158805</div>
<div class="t" style="left:45.0px;width:600px;text-align:center;top:324.79px;font-size:11px;color:#262626">Rosy</div>
<div class="t" style="left:163.5px;width:600px;text-align:center;top:324.79px;font-size:11px;color:#262626">(415)-38157051</div>
<div class="t" style="left:45.0px;width:600px;text-align:center;top:346.79px;font-size:11px;color:#262626">Johana</div>
<div class="t" style="left:163.5px;width:600px;text-align:center;top:346.79px;font-size:11px;color:#262626">(415)-38200477</div>
<div class="t" style="left:45.0px;width:600px;text-align:center;top:368.79px;font-size:11px;color:#262626">Mary</div>
<div class="t" style="left:163.5px;width:600px;text-align:center;top:368.79px;font-size:11px;color:#262626">(415)-37873641</div>
<div class="t" style="left:45.0px;width:600px;text-align:center;top:391.79px;font-size:11px;color:#262626">Rita</div>
<div class="t" style="left:163.5px;width:600px;text-align:center;top:391.79px;font-size:11px;color:#262626">(415)-37659999</div>
<div class="t" style="left:45.0px;width:600px;text-align:center;top:413.79px;font-size:11px;color:#262626">Morocco</div>
<div class="t" style="left:163.5px;width:600px;text-align:center;top:413.79px;font-size:11px;color:#262626">(415)-38404463</div>
<div class="t" style="left:45.0px;width:600px;text-align:center;top:435.79px;font-size:11px;color:#262626">Rocky</div>
<div class="t" style="left:163.5px;width:600px;text-align:center;top:435.79px;font-size:11px;color:#262626">(415)-38388995</div>
<div class="t" style="left:-162.6px;width:600px;text-align:center;top:152.19px;font-size:13.6px;font-weight:bold;color:#1a1a1a">Table with Duplicate values</div>
<div class="t" style="left:120.19999999999999px;width:600px;text-align:center;top:152.19px;font-size:13.6px;font-weight:bold;color:#1a1a1a">Table with Unique values</div>
<svg class="ab" style="left:0;top:0" width="768" height="498" viewBox="0 0 768 498" font-family="Liberation Sans, sans-serif"><rect x="597.7" y="171.6" width="153.3" height="40.5" fill="none" stroke="#cf2424" stroke-width="2.5"/><text x="605.5" y="186.6" textLength="140.8" lengthAdjust="spacingAndGlyphs" font-size="14.5" font-weight="bold" fill="#1c1c9c">Remove Duplicates</text><text x="649.3" y="204.3" textLength="52.6" lengthAdjust="spacingAndGlyphs" font-size="13" font-weight="bold" fill="#237a23">"option"</text><text x="543.7" y="311.5" textLength="76" lengthAdjust="spacingAndGlyphs" font-size="14" font-weight="bold" fill="#2a702c">Duplicates</text><text x="550.2" y="327.8" textLength="62" lengthAdjust="spacingAndGlyphs" font-size="14" font-weight="bold" fill="#2a702c">removed</text><path d="M641.2 67.3L651.8 98.4H631.5z" fill="#0a0ad0"/><rect x="638.6" y="97" width="6.2" height="71.2" fill="#0a0ad0"/><path d="M623.4 69.5L619.0 68.0L549.5 258.8L556.1 261.2z" fill="#f01010"/><path d="M542.6 287.8L543.2 256.5L562.5 263.8z" fill="#f01010"/></svg>
</body></html>
